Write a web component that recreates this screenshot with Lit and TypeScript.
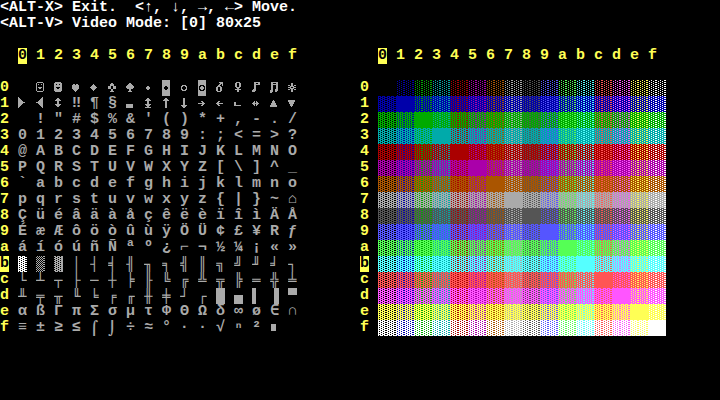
import { LitElement, html, svg, css, nothing } from "lit";
import { customElement, property } from "lit/decorators.js";
import { classMap } from "lit/directives/class-map.js";

const HEX = [..."0123456789abcdef"];

/* Code page 437, sixteen characters to a row. */
const CODE_PAGE = [
  " ☺☻♥♦♣♠•◘○◙♂♀♪♫☼",
  "►◄↕‼¶§▬↨↑↓→←∟↔▲▼",
  " !\"#$%&'()*+,-./",
  "0123456789:;<=>?",
  "@ABCDEFGHIJKLMNO",
  "PQRSTUVWXYZ[\\]^_",
  "`abcdefghijklmno",
  "pqrstuvwxyz{|}~⌂",
  "ÇüéâäàåçêëèïîìÄÅ",
  "ÉæÆôöòûùÿÖÜ¢£¥Rƒ",
  "áíóúñÑªº¿⌐¬½¼¡«»",
  "░▒▓│┤╡╢╖╕╣║╗╝╜╛┐",
  "└┴┬├─┼╞╟╚╔╩╦╠═╬╧",
  "╨╤╥╙╘╒╓╫╪┘┌█▄▌▐▀",
  "αßΓπΣσµτΦΘΩδ∞ø∈∩",
  "≡±≥≤⌠⌡÷≈°∙·√ⁿ²■ ",
].map((row) => [...row]);

const PALETTE = [
  "#000000", "#0000aa", "#00aa00", "#00aaaa",
  "#aa0000", "#aa00aa", "#aa5500", "#aaaaaa",
  "#555555", "#5555ff", "#55ff55", "#55ffff",
  "#ff5555", "#ff55ff", "#ffff55", "#ffffff",
];

/* Pictographs: first scan line, then one byte per scan line. */
const PICTOGRAPHS: Record<string, [number, string]> = {
  "☺": [2, "7E 81 A5 81 81 BD 99 81 81 7E"],
  "☻": [2, "7E FF DB FF FF C3 E7 FF FF 7E"],
  "♥": [4, "6C FE FE FE FE 7C 38 10"],
  "♦": [4, "10 38 7C FE 7C 38 10"],
  "♣": [3, "18 3C 3C E7 E7 E7 18 18 3C"],
  "♠": [3, "18 3C 7E FF FF 7E 18 18 3C"],
  "•": [6, "18 3C 3C 18"],
  "◘": [0, "FF FF FF FF FF FF E7 C3 C3 E7 FF FF FF FF FF FF"],
  "○": [5, "3C 66 42 42 66 3C"],
  "◙": [0, "FF FF FF FF FF C3 99 BD BD 99 C3 FF FF FF FF FF"],
  "♂": [2, "1E 0E 1A 32 78 CC CC CC CC 78"],
  "♀": [2, "3C 66 66 66 66 3C 18 7E 18 18"],
  "♪": [2, "3F 33 3F 30 30 30 30 70 F0 E0"],
  "♫": [2, "7F 63 7F 63 63 63 63 67 E7 E6 C0"],
  "☼": [3, "18 18 DB 3C E7 3C DB 18 18"],
  "►": [1, "80 C0 E0 F0 F8 FE F8 F0 E0 C0 80"],
  "◄": [1, "02 06 0E 1E 3E FE 3E 1E 0E 06 02"],
  "↕": [2, "18 3C 7E 18 18 18 7E 3C 18"],
  "▬": [8, "FE FE FE FE"],
  "↨": [2, "18 3C 7E 18 18 18 7E 3C 18 7E"],
  "↑": [2, "18 3C 7E 18 18 18 18 18 18 18"],
  "↓": [2, "18 18 18 18 18 18 18 7E 3C 18"],
  "→": [5, "18 0C FE 0C 18"],
  "←": [5, "30 60 FE 60 30"],
  "∟": [6, "C0 C0 C0 FE"],
  "↔": [5, "28 6C FE 6C 28"],
  "▲": [4, "10 38 38 7C 7C FE FE"],
  "▼": [4, "FE FE 7C 7C 38 38 10"],
  "■": [4, "7C 7C 7C 7C 7C 7C 7C"],
};

/* Characters that are a filled or shaded part of the cell. */
const FILLS: Record<string, string> = {
  "░": "light", "▒": "medium", "▓": "dark",
  "█": "full", "▄": "lower", "▌": "left", "▐": "right", "▀": "upper",
};

const isLineDrawing = (char: string) => /[\u2500-\u257f⌠⌡]/.test(char);

const fillStyles = css`
  .fill {
    --dot: conic-gradient(at 1px 1px, transparent 75%, currentColor 0);
    --dash: conic-gradient(at 2px 1px, transparent 75%, currentColor 0);
    --hole: conic-gradient(at 1px 1px, transparent 75%, #000 0);
    display: block;
    width: 9px;
    height: 16px;
  }
  .light {
    background-image: var(--dot), var(--dash), var(--dot), var(--dot);
    background-position: 3px 0, 7px 0, 1px 1px, 5px 1px;
    background-size: 9px 2px;
  }
  .medium {
    background-image: var(--dot), var(--dot), var(--dot), var(--dash),
      var(--dot), var(--dot), var(--dot), var(--dot);
    background-position: 1px 0, 3px 0, 5px 0, 7px 0, 0 1px, 2px 1px, 4px 1px, 6px 1px;
    background-size: 9px 2px;
  }
  .dark {
    background-color: currentColor;
    background-image: var(--hole), var(--hole), var(--hole), var(--hole);
    background-position: 2px 0, 6px 0, 0 1px, 4px 1px;
    background-size: 9px 2px;
  }
  .full { background: currentColor; }
  .lower { background: linear-gradient(transparent 7px, currentColor 0); }
  .upper { background: linear-gradient(currentColor 7px, transparent 0); }
  .left { background: linear-gradient(90deg, currentColor 4px, transparent 0); }
  .right { background: linear-gradient(90deg, transparent 4px, currentColor 0); }
`;

const gridStyles = css`
  :host { display: block; }
  table {
    border-collapse: collapse;
    table-layout: fixed;
    width: 306px;
  }
  th, td {
    width: 18px;
    height: 16px;
    padding: 0;
    font-weight: bold;
    text-align: left;
  }
  thead th { height: 32px; vertical-align: top; }
  th { color: #ffff55; }
  .glyph {
    display: block;
    width: 9px;
    height: 16px;
    white-space: pre;
  }
  th .current { background: #ffff55; color: #000; }
`;

const heading = (text: string, current: boolean) =>
  html`<span class=${classMap({ glyph: true, current })}>${text}</span>`;

const columnHeadings = (selected: number) => html`
  <thead>
    <tr>
      <td></td>
      ${HEX.map((h, i) => html`<th scope="col">${heading(h, i === selected)}</th>`)}
    </tr>
  </thead>
`;

@customElement("char-table")
class CharTable extends LitElement {
  @property({ type: Number }) row = 0;
  @property({ type: Number }) column = 0;

  static styles = [
    gridStyles,
    fillStyles,
    css`
      td { color: #aaaaaa; }
      td .current { background: #ffffff; color: #000; }
      .lines {
        overflow: hidden;
        font-family: "DejaVu Sans Mono", monospace;
        font-size: 14px;
      }
      svg { display: block; width: 8px; height: 16px; fill: currentColor; }
    `,
  ];

  private pictograph(char: string) {
    const [top, bytes] = PICTOGRAPHS[char];
    const d = bytes
      .split(" ")
      .map((byte, y) => {
        const bits = parseInt(byte, 16);
        return Array.from({ length: 8 }, (_, x) =>
          bits & (128 >> x) ? `M${x} ${top + y}h1v1h-1z` : ""
        ).join("");
      })
      .join("");
    return html`<svg viewBox="0 0 8 16" shape-rendering="crispEdges" role="img" aria-label=${char}>
      ${svg`<path d=${d}></path>`}
    </svg>`;
  }

  private glyph(char: string) {
    if (char in PICTOGRAPHS) return this.pictograph(char);
    if (char in FILLS)
      return html`<span class="fill ${FILLS[char]}" role="img" aria-label=${char}></span>`;
    return char === " " ? nothing : char;
  }

  private cell(char: string, current: boolean) {
    const classes = { glyph: true, current, lines: isLineDrawing(char) };
    return html`<td><span class=${classMap(classes)}>${this.glyph(char)}</span></td>`;
  }

  render() {
    return html`
      <table aria-label="Characters">
        ${columnHeadings(this.column)}
        <tbody>
          ${CODE_PAGE.map(
            (chars, r) => html`<tr>
              <th scope="row">${heading(HEX[r], r === this.row)}</th>
              ${chars.map((char, c) => this.cell(char, r === this.row && c === this.column))}
            </tr>`
          )}
        </tbody>
      </table>
    `;
  }
}

@customElement("color-table")
class ColorTable extends LitElement {
  @property({ type: Number }) row = 0;
  @property({ type: Number }) column = 0;

  static styles = [
    gridStyles,
    fillStyles,
    css`
      .swatch { display: flex; }
    `,
  ];

  render() {
    return html`
      <table aria-label="Colours">
        ${columnHeadings(this.column)}
        <tbody>
          ${PALETTE.map(
            (back, r) => html`<tr>
              <th scope="row">${heading(HEX[r], r === this.row)}</th>
              ${PALETTE.map(
                (fore) => html`<td>
                  <div class="swatch" style="background-color:${back};color:${fore}">
                    <span class="fill light"></span><span class="fill light"></span>
                  </div>
                </td>`
              )}
            </tr>`
          )}
        </tbody>
      </table>
    `;
  }
}

@customElement("app-root")
class AppRoot extends LitElement {
  static styles = css`
    :host {
      display: block;
      min-height: 100vh;
      background: #000;
      color: #fff;
      font: bold 15px/16px "Liberation Mono", "DejaVu Sans Mono", monospace;
    }
    header { padding-bottom: 16px; }
    p { margin: 0; white-space: pre; }
    main { display: grid; grid-template-columns: 1fr 1fr; }
  `;

  render() {
    return html`
      <header>
        <p>&lt;ALT-X&gt; Exit.  &lt;↑, ↓, →, ←&gt; Move.</p>
        <p>&lt;ALT-V&gt; Video Mode: [0] 80x25</p>
      </header>
      <main>
        <char-table row="11" column="0"></char-table>
        <color-table row="11" column="0"></color-table>
      </main>
    `;
  }
}
